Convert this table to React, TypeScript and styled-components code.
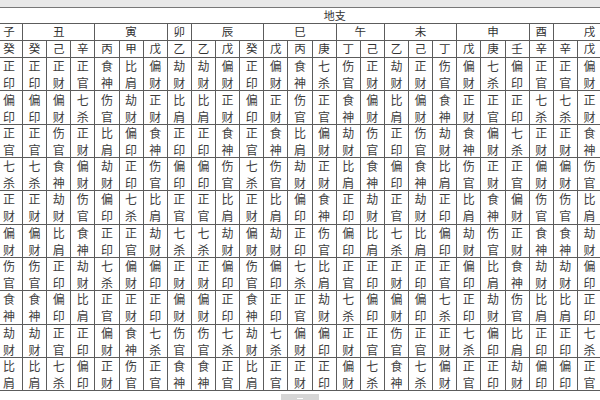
import React from "react";
import styled, { createGlobalStyle } from "styled-components";

const GlobalStyle = createGlobalStyle`
    html, body {
        margin: 0;
        padding: 0;
        background: #ffffff;
        overflow: hidden;
    }
    body {
        font-family: "Noto Sans CJK SC", "Noto Sans", sans-serif;
        color: #333;
    }
`;

const STEMS = ["甲", "乙", "丙", "丁", "戊", "己", "庚", "辛", "壬", "癸"];

// 地支 and their hidden stems (藏干)
const BRANCHES: { name: string; hidden: string[] }[] = [
    { name: "子", hidden: ["癸"] },
    { name: "丑", hidden: ["癸", "己", "辛"] },
    { name: "寅", hidden: ["丙", "甲", "戊"] },
    { name: "卯", hidden: ["乙"] },
    { name: "辰", hidden: ["乙", "戊", "癸"] },
    { name: "巳", hidden: ["戊", "丙", "庚"] },
    { name: "午", hidden: ["丁", "己"] },
    { name: "未", hidden: ["乙", "己", "丁"] },
    { name: "申", hidden: ["戊", "庚", "壬"] },
    { name: "酉", hidden: ["辛"] },
    { name: "戌", hidden: ["辛", "戊", "丁"] },
    { name: "亥", hidden: ["壬", "甲"] },
];

const GODS = [
    ["比肩", "劫财"],
    ["食神", "伤官"],
    ["偏财", "正财"],
    ["七杀", "正官"],
    ["偏印", "正印"],
];

const tenGod = (day: string, other: string) => {
    const d = STEMS.indexOf(day);
    const s = STEMS.indexOf(other);
    const rel = (Math.floor(s / 2) - Math.floor(d / 2) + 5) % 5;
    const samePolarity = d % 2 === s % 2;
    return GODS[rel][samePolarity ? 0 : 1];
};

const columns = BRANCHES.flatMap((b) => b.hidden);

const TopStrip = styled.div`
    height: 7px;
    background: #e8e8e8;
`;

const Viewport = styled.div`
    width: 600px;
    overflow: hidden;
`;

const Grid = styled.div<{ $cols: number }>`
    display: grid;
    width: max-content;
    margin-left: -4px;
    grid-template-columns: 26px repeat(${(p) => p.$cols - 1}, 23.13px);
    grid-template-rows: 15px 16px 16px repeat(10, 32.33px);
    gap: 1px;
    background: #5c5c5c;
    border-top: 1px solid #777;
    border-bottom: 1px solid #5c5c5c;
`;

const Title = styled.div<{ $span: number }>`
    grid-column: span ${(p) => p.$span};
    background: #fff;
    display: flex;
    align-items: center;
    justify-content: center;
    font-size: 11px;
    line-height: 1;
`;

const HeadCell = styled.div<{ $span?: number }>`
    grid-column: span ${(p) => p.$span ?? 1};
    background: #fff;
    display: flex;
    align-items: center;
    justify-content: center;
    font-size: 11.5px;
    line-height: 1;
`;

const GodCell = styled.div`
    background: #fff;
    display: flex;
    flex-direction: column;
    align-items: center;
    justify-content: center;
    font-size: 12px;
    line-height: 17px;
    color: #3d3d3d;
`;

const Footer = styled.div`
    display: flex;
    justify-content: center;
    padding-top: 3px;
`;

const Handle = styled.div`
    width: 38px;
    height: 8px;
    background: #d6d6d6;
    display: flex;
    justify-content: center;
    align-items: center;

    &::after {
        content: "";
        width: 6px;
        height: 1px;
        background: #fff;
    }
`;

export default function App() {
    return (
        <>
            <GlobalStyle />
            <TopStrip />
            <Viewport>
                <Grid $cols={columns.length}>
                    <Title $span={columns.length}>地支</Title>
                    {BRANCHES.map((b) => (
                        <HeadCell key={b.name} $span={b.hidden.length}>
                            {b.name}
                        </HeadCell>
                    ))}
                    {columns.map((s, i) => (
                        <HeadCell key={"h" + i}>{s}</HeadCell>
                    ))}
                    {STEMS.map((day) =>
                        columns.map((s, i) => {
                            const god = tenGod(day, s);
                            return (
                                <GodCell key={day + i}>
                                    <span>{god[0]}</span>
                                    <span>{god[1]}</span>
                                </GodCell>
                            );
                        })
                    )}
                </Grid>
            </Viewport>
            <Footer>
                <Handle />
            </Footer>
        </>
    );
}
